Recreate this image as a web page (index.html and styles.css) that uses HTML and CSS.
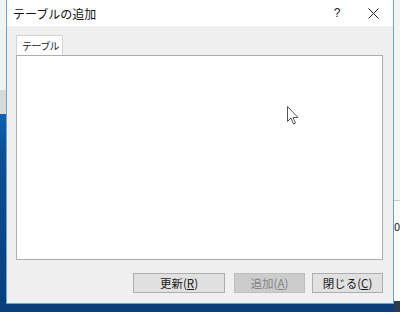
FILE: index.html
```html
<!DOCTYPE html>
<html lang="ja">
<head>
<meta charset="utf-8">
<link rel="stylesheet" href="styles.css">
</head>
<body>
<div class="screen">
  <div class="desk-left">
    <div class="dl-top"></div>
    <div class="dl-gray"></div>
    <div class="dl-blue"></div>
  </div>
  <div class="dialog">
    <div class="titlebar">
      <span class="title">テーブルの追加</span>
      <span class="help">?</span>
      <span class="close">
        <svg width="11" height="11" viewBox="0 0 11 11"><path d="M0.5 0.5 L10.5 10.5 M10.5 0.5 L0.5 10.5" stroke="#222" stroke-width="1" fill="none"/></svg>
      </span>
    </div>
    <div class="body">
      <div class="tabs">
        <div class="tab">テーブル</div>
      </div>
      <div class="panel">
        <svg class="cursor" width="12" height="19" viewBox="0 0 12 19"><path d="M0.5 0.5 L0.5 15.5 L4 12 L6.5 18 L8.5 17 L6 11.5 L11 11.5 Z" fill="#fff" stroke="#555" stroke-width="1"/></svg>
      </div>
      <div class="buttons">
        <button class="btn wide">更新(<u>R</u>)</button>
        <button class="btn disabled">追加(<u>A</u>)</button>
        <button class="btn last">閉じる(<u>C</u>)</button>
      </div>
    </div>
  </div>
  <div class="desk-right">
    <div class="dr-top"></div>
    <div class="dr-mid"><span>0</span></div>
    <div class="dr-bot"></div>
  </div>
</div>
</body>
</html>
```
FILE: styles.css
```css
html, body {
  margin: 0;
  padding: 0;
  width: 400px;
  height: 312px;
  overflow: hidden;
  font-family: "Noto Sans CJK JP", "Noto Sans", sans-serif;
  font-size: 12px;
  color: #1a1a1a;
}
.screen {
  display: flex;
  width: 400px;
  height: 312px;
  background: #0c3f78;
}
.desk-left {
  width: 6px;
  display: flex;
  flex-direction: column;
}
.dl-top { height: 90px; background: #f2f2f2; }
.dl-gray { height: 24px; background: #d9d9d9; }
.dl-blue { flex: 1; background: linear-gradient(#0f63b0 0, #0b4f95 40px, #083f7c 200px); }
.desk-right {
  width: 6px;
  display: flex;
  flex-direction: column;
}
.dr-top { height: 200px; background: #f4f4f4; }
.dr-mid { height: 100px; background: #fbfbfb; border-top: 1px solid #ccc; font-size: 11px; line-height: 50px; overflow: hidden; }
.dr-bot { flex: 1; background: #2b3b52; }
.dialog {
  width: 386px;
  height: 303px;
  border: 1px solid #6aa3d8;
  border-top: none;
  background: #f0f0f0;
  display: flex;
  flex-direction: column;
}
.titlebar {
  height: 26px;
  background: #fff;
  display: flex;
  align-items: center;
  padding-left: 6px;
}
.title {
  flex: 1;
  font-size: 12px;
  color: #111;
}
.help {
  width: 20px;
  text-align: center;
  margin-right: 14px;
  font-family: "Liberation Sans", sans-serif;
  font-size: 12px;
  color: #222;
}
.close {
  width: 24px;
  display: flex;
  justify-content: center;
  margin-right: 8px;
}
.body {
  flex: 1;
  padding: 9px 10px 0 9px;
  display: flex;
  flex-direction: column;
}
.tabs {
  display: flex;
  height: 20px;
}
.tab {
  width: 47px;
  height: 20px;
  box-sizing: border-box;
  border: 1px solid #d4d4d4;
  border-bottom: none;
  background: #fff;
  padding-left: 5px;
  line-height: 19px;
  font-size: 10px;
  letter-spacing: -0.6px;
  white-space: nowrap;
}
.panel {
  position: relative;
  height: 205px;
  box-sizing: border-box;
  border: 1px solid #adadad;
  background: #fff;
}
.cursor {
  position: absolute;
  left: 270px;
  top: 50px;
}
.buttons {
  display: flex;
  justify-content: flex-end;
  margin-top: 13px;
}
.btn {
  height: 20px;
  box-sizing: border-box;
  border: 1px solid #adadad;
  background: #e1e1e1;
  font-family: "Noto Sans CJK JP", "Noto Sans", sans-serif;
  font-size: 11.5px;
  color: #1a1a1a;
  padding: 0;
  width: 71px;
  line-height: 17px;
  margin: 0;
}
.btn.wide {
  width: 92px;
  margin-right: 9px;
}
.btn.last {
  margin-left: 7px;
}
.btn.disabled {
  background: #cccccc;
  border-color: #bfbfbf;
  color: #838383;
}
.btn u { text-decoration: underline; }
```
